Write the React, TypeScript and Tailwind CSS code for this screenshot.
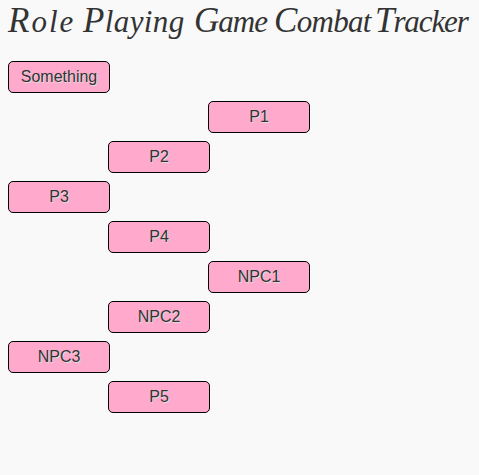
const words = [
  { text: "Role", style: "w-[75px] tracking-[2px]" },
  { text: "Playing", style: "w-[111px] tracking-[0.4px]" },
  { text: "Game", style: "w-[80px] tracking-[-1px]" },
  { text: "Combat", style: "w-[101px] tracking-[-0.7px]" },
  { text: "Tracker", style: "w-[96px] tracking-[-1.1px]" },
];

const combatants = [
  { name: "Something", lane: "ml-0" },
  { name: "P1", lane: "ml-[200px]" },
  { name: "P2", lane: "ml-[100px]" },
  { name: "P3", lane: "ml-0" },
  { name: "P4", lane: "ml-[100px]" },
  { name: "NPC1", lane: "ml-[200px]" },
  { name: "NPC2", lane: "ml-[100px]" },
  { name: "NPC3", lane: "ml-0" },
  { name: "P5", lane: "ml-[100px]" },
];

export default function App() {
  return (
    <main className="h-screen overflow-hidden bg-[#f9f9f9] pl-2 text-[#333]">
      <h1 className="flex h-[61px] whitespace-nowrap font-['Liberation_Serif',serif] text-[31px] leading-[41px] italic">
        {words.map((word) => (
          <span
            key={word.text}
            className={`block h-[41px] shrink-0 first-letter:text-[35px] ${word.style}`}
          >
            {word.text}
          </span>
        ))}
      </h1>
      <ul className="flex flex-col gap-2">
        {combatants.map((combatant) => (
          <li
            key={combatant.name}
            className={`h-8 w-[102px] rounded-[5px] border border-black bg-[#ffaacc] text-center font-['Liberation_Sans',Arial,sans-serif] text-base leading-[30px] [text-shadow:1px_1px_0_#ddd] ${combatant.lane}`}
          >
            {combatant.name}
          </li>
        ))}
      </ul>
    </main>
  );
}
